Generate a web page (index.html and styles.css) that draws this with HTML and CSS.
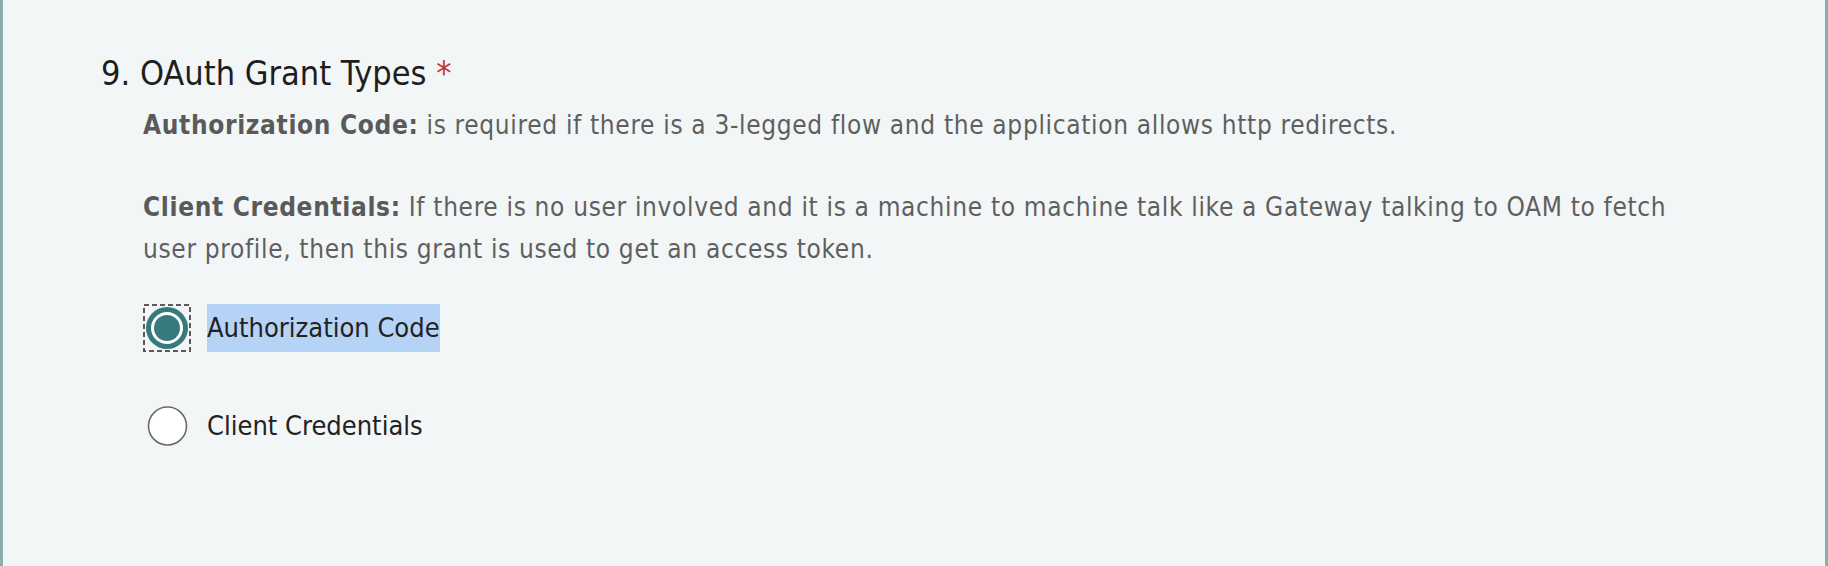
FILE: index.html
```html
<!DOCTYPE html>
<html>
<head>
<meta charset="utf-8">
<link rel="stylesheet" href="styles.css">
</head>
<body>
<div class="frame">
  <section class="question">
    <h2 class="q-title">9. OAuth Grant Types <span class="req">*</span></h2>
    <div class="q-desc">
      <p class="para"><b>Authorization Code:</b> is required if there is a 3-legged flow and the application allows http redirects.</p>
      <p class="para"><b>Client Credentials:</b> If there is no user involved and it is a machine to machine talk like a Gateway talking to OAM to fetch<br>user profile, then this grant is used to get an access token.</p>
    </div>
    <div class="options">
      <label class="option">
        <span class="radio">
          <svg width="48" height="48" viewBox="0 0 48 48">
            <rect x="1" y="1" width="46" height="46" fill="none" stroke="#5a5a5a" stroke-width="2" stroke-dasharray="5 3"/>
            <circle cx="24" cy="24" r="21" fill="#367a7b"/>
            <circle cx="24" cy="24" r="16" fill="#ffffff"/>
            <circle cx="24" cy="24" r="13" fill="#367a7b"/>
          </svg>
        </span>
        <span class="label selected">Authorization Code</span>
      </label>
      <label class="option">
        <span class="radio">
          <svg width="48" height="48" viewBox="0 0 48 48">
            <circle cx="24.5" cy="24" r="19" fill="#ffffff" stroke="#6a6a6a" stroke-width="1.6"/>
          </svg>
        </span>
        <span class="label">Client Credentials</span>
      </label>
    </div>
  </section>
</div>
</body>
</html>
```
FILE: styles.css
```css
html, body {
  margin: 0;
  padding: 0;
}
body {
  background: #f2f6f7;
  font-family: "DejaVu Sans Condensed", "DejaVu Sans", sans-serif;
  width: 1828px;
  height: 566px;
  overflow: hidden;
}
.frame {
  box-sizing: border-box;
  height: 566px;
  border-left: 3px solid #8eadae;
  border-right: 3px solid #8eadae;
  background: #f2f6f7;
}
.question {
  padding: 53px 0 0 98px;
}
.q-title {
  margin: 0;
  font-size: 34px;
  line-height: 40px;
  font-weight: normal;
  color: #1e1e1e;
}
.req {
  color: #c0392b;
}
.q-desc {
  margin: 11px 0 0 42px;
  font-size: 26px;
  line-height: 42px;
  letter-spacing: 0.66px;
  color: #5f5f5f;
}
.para {
  margin: 0;
}
.para + .para {
  margin-top: 40px;
}
.para b {
  font-weight: bold;
  color: #5a5a5a;
}
.options {
  margin: 34px 0 0 42px;
  display: flex;
  flex-direction: column;
  gap: 50px;
}
.option {
  display: flex;
  align-items: center;
  gap: 16px;
  height: 48px;
}
.radio {
  display: block;
  width: 48px;
  height: 48px;
}
.radio svg {
  display: block;
}
.label {
  font-size: 27px;
  line-height: 48px;
  color: #222222;
}
.label.selected {
  background: #b4d3f7;
}
```
